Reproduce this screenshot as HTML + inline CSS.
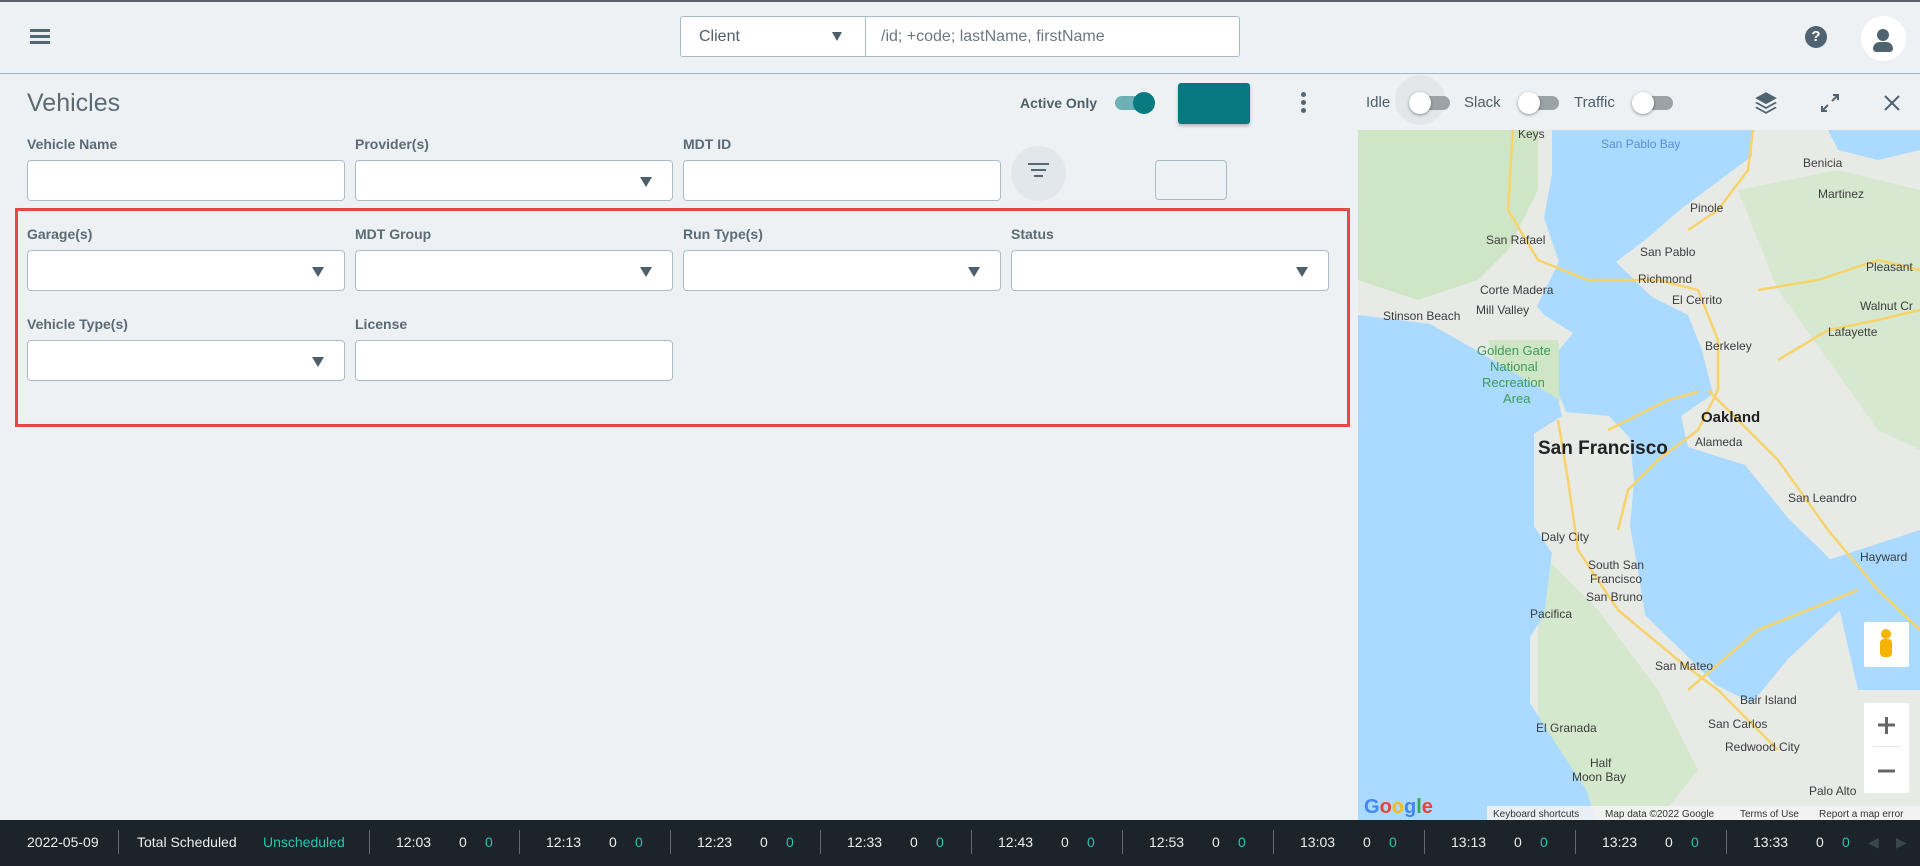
<!DOCTYPE html>
<html><head><meta charset="utf-8">
<style>
*{box-sizing:border-box;margin:0;padding:0}
body{width:1920px;height:866px;overflow:hidden;background:#edf1f4;font-family:"Liberation Sans",sans-serif;position:relative;color:#4f5f69}
.abs{position:absolute}
.lbl{position:absolute;font-size:14px;font-weight:bold;color:#5b6b75}
.inp{position:absolute;width:318px;height:41px;background:#fff;border:1px solid #a9bcc6;border-radius:4px}
.inp.dd::after{content:"";position:absolute;right:20px;top:16px;border-left:6px solid transparent;border-right:6px solid transparent;border-top:10px solid #4f5f69}
.tg{position:absolute;width:38px;height:14px;border-radius:7px;background:#9ba3a7}
.tg i{position:absolute;left:-3px;top:-4px;width:22px;height:22px;border-radius:50%;background:#fff;box-shadow:0 1px 3px rgba(0,0,0,.4)}
.bb{position:absolute;top:834px;font-size:14px;color:#eceff1}
.tq{color:#26c6b2}
.sep{position:absolute;top:830px;width:1px;height:24px;background:#5f6b73}
.ml{font-family:"Liberation Sans",sans-serif;font-size:12px;fill:#3c3c3c}
</style></head><body>
<div class="abs" style="left:0;top:0;width:1920px;height:2px;background:#5a6268"></div>
<div class="abs" style="left:0;top:73px;width:1920px;height:1px;background:#a9b6bf"></div>
<!-- hamburger -->
<div class="abs" style="left:30px;top:29px;width:20px;height:3px;background:#546873;box-shadow:0 6px 0 #546873,0 12px 0 #546873"></div>
<!-- search -->
<div class="abs" style="left:680px;top:16px;width:560px;height:41px;background:#fff;border:1px solid #a9bcc6;border-radius:3px"></div>
<div class="abs" style="left:865px;top:17px;width:1px;height:39px;background:#a9bcc6"></div>
<div class="abs" style="left:699px;top:28px;font-size:16px;color:#4f5f69">Client</div>
<div class="abs" style="left:832px;top:32px;border-left:5px solid transparent;border-right:5px solid transparent;border-top:9px solid #4f5f69"></div>
<div class="abs" style="left:881px;top:28px;font-size:16px;color:#6b7780">/id; +code; lastName, firstName</div>
<!-- help / avatar -->
<div class="abs" style="left:1805px;top:26px;width:22px;height:22px;border-radius:50%;background:#4f6470;color:#fff;font-size:15px;font-weight:bold;text-align:center;line-height:22px">?</div>
<div class="abs" style="left:1861px;top:16px;width:45px;height:45px;border-radius:50%;background:#fff"></div>
<div class="abs" style="left:1877px;top:29px;width:12px;height:12px;border-radius:50%;background:#4f6470"></div>
<div class="abs" style="left:1873px;top:42px;width:20px;height:10px;border-radius:10px 10px 5px 5px;background:#4f6470"></div>
<!-- title row -->
<div class="abs" style="left:27px;top:89px;font-size:25px;font-weight:300;color:#5b6b75">Vehicles</div>
<div class="abs" style="left:1020px;top:95px;font-size:14px;font-weight:bold;color:#4f5f69">Active Only</div>
<div class="abs" style="left:1115px;top:96px;width:38px;height:14px;border-radius:7px;background:#6fb0b6"></div>
<div class="abs" style="left:1133px;top:92px;width:22px;height:22px;border-radius:50%;background:#087a80"></div>
<div class="abs" style="left:1178px;top:83px;width:72px;height:41px;border-radius:3px;background:#07787f;box-shadow:0 2px 3px rgba(0,0,0,.25)"></div>
<div class="abs" style="left:1301px;top:92px;width:5px;height:5px;border-radius:50%;background:#546873;box-shadow:0 8px 0 #546873,0 16px 0 #546873"></div>
<!-- row1 -->
<div class="lbl" style="left:27px;top:136px">Vehicle Name</div>
<div class="lbl" style="left:355px;top:136px">Provider(s)</div>
<div class="lbl" style="left:683px;top:136px">MDT ID</div>
<div class="inp" style="left:27px;top:160px"></div>
<div class="inp dd" style="left:355px;top:160px"></div>
<div class="inp" style="left:683px;top:160px"></div>
<div class="abs" style="left:1011px;top:146px;width:55px;height:55px;border-radius:50%;background:#e2e7eb"></div>
<div class="abs" style="left:1028px;top:163px;width:21px;height:2px;background:#546873"></div>
<div class="abs" style="left:1031px;top:169px;width:15px;height:2px;background:#546873"></div>
<div class="abs" style="left:1034px;top:175px;width:9px;height:2px;background:#546873"></div>
<div class="abs" style="left:1155px;top:160px;width:72px;height:40px;border:1px solid #a9bcc6;border-radius:4px"></div>
<!-- red box -->
<div class="abs" style="left:15px;top:208px;width:1335px;height:219px;border:3px solid #e8483f"></div>
<div class="lbl" style="left:27px;top:226px">Garage(s)</div>
<div class="lbl" style="left:355px;top:226px">MDT Group</div>
<div class="lbl" style="left:683px;top:226px">Run Type(s)</div>
<div class="lbl" style="left:1011px;top:226px">Status</div>
<div class="inp dd" style="left:27px;top:250px"></div>
<div class="inp dd" style="left:355px;top:250px"></div>
<div class="inp dd" style="left:683px;top:250px"></div>
<div class="inp dd" style="left:1011px;top:250px"></div>
<div class="lbl" style="left:27px;top:316px">Vehicle Type(s)</div>
<div class="lbl" style="left:355px;top:316px">License</div>
<div class="inp dd" style="left:27px;top:340px"></div>
<div class="inp" style="left:355px;top:340px"></div>
<!-- map header -->
<div class="abs" style="left:1366px;top:94px;font-size:15px;color:#4f5f69">Idle</div>
<div class="abs" style="left:1395px;top:75px;width:50px;height:50px;border-radius:50%;background:#e3e7ea"></div>
<div class="tg" style="left:1412px;top:96px"><i></i></div>
<div class="abs" style="left:1464px;top:94px;font-size:15px;color:#4f5f69">Slack</div>
<div class="tg" style="left:1521px;top:96px"><i></i></div>
<div class="abs" style="left:1574px;top:94px;font-size:15px;color:#4f5f69">Traffic</div>
<div class="tg" style="left:1635px;top:96px"><i></i></div>
<svg class="abs" style="left:1753px;top:90px" width="26" height="26" viewBox="0 0 24 24"><path d="M12 2 2 7.5 12 13l10-5.5z" fill="#4f6470"/><path d="M3.5 11 12 15.7 20.5 11 22 12 12 17.5 2 12z" fill="#4f6470"/><path d="M3.5 15.5 12 20.2 20.5 15.5 22 16.5 12 22 2 16.5z" fill="#4f6470"/></svg>
<svg class="abs" style="left:1819px;top:92px" width="22" height="22" viewBox="0 0 22 22" stroke="#4f6470" stroke-width="2" fill="none"><path d="M13 9 19 3M14 3h5v5M9 13 3 19M3 14v5h5"/></svg>
<svg class="abs" style="left:1883px;top:94px" width="18" height="18" viewBox="0 0 18 18" stroke="#4f6470" stroke-width="2"><path d="M2 2 16 16M16 2 2 16"/></svg>
<!-- map -->
<svg class="abs" style="left:1358px;top:130px" width="562" height="690" viewBox="0 0 562 690">
<rect width="562" height="690" fill="#e8eae6"/>
<path d="M0 0H180V60L150 120 120 150 60 170 0 150z" fill="#cfe6c6"/>
<path d="M380 60 480 40 562 60V320L520 300 470 230 420 160z" fill="#d6e9d0"/>
<path d="M180 420 240 480 300 560 340 640 300 690H180z" fill="#d3e8cc"/>
<path d="M130 210 200 210 205 270 150 280z" fill="#cfe6c6"/>
<path d="M0 185 72 194 118 220 200 269 204 286 176 304 176 396 194 423 186 485 172 507 172 573 200 617 229 661 237 690H0z" fill="#aadaff"/>
<path d="M194 0H394V26L358 53 323 79 287 110 258 132 294 167 330 185 344 220 355 264 323 286 330 317 387 335 430 388 466 423 502 463 477 485 430 529 394 573 358 555 323 520 287 485 280 441 272 396 276 352 272 308 251 286 208 282 201 264 201 220 215 203 186 185 179 176 201 132 186 88 194 44z" fill="#aadaff"/>
<path d="M470 0H562V20L520 30 480 20z" fill="#aadaff"/>
<path d="M470 430 562 400V560L500 560z" fill="#aadaff"/>
<g stroke="#f7d36b" stroke-width="2.5" fill="none">
<path d="M155 0 150 80 180 130 230 150 300 150 340 160 360 210 360 260 340 300 300 330 270 360 260 400"/>
<path d="M250 300 310 270 340 262"/>
<path d="M200 290 210 350 220 420 260 480 320 530 360 560 420 620"/>
<path d="M350 260 420 330 470 400 520 460 562 500"/>
<path d="M330 560 400 500 500 460"/>
<path d="M400 160 460 150 520 130 562 140"/>
<path d="M420 230 470 200 520 190 562 180"/>
<path d="M395 0 390 40 360 80 330 100"/>
</g>
<g class="ml">
<text x="160" y="8">Keys</text>
<text x="243" y="18" fill="#5a8fd0" style="fill:#5a8fd0">San Pablo Bay</text>
<text x="445" y="37">Benicia</text>
<text x="460" y="68">Martinez</text>
<text x="332" y="82">Pinole</text>
<text x="128" y="114">San Rafael</text>
<text x="282" y="126">San Pablo</text>
<text x="508" y="141">Pleasant</text>
<text x="280" y="153">Richmond</text>
<text x="122" y="164">Corte Madera</text>
<text x="314" y="174">El Cerrito</text>
<text x="502" y="180">Walnut Cr</text>
<text x="25" y="190">Stinson Beach</text>
<text x="118" y="184">Mill Valley</text>
<text x="470" y="206">Lafayette</text>
<text x="347" y="220">Berkeley</text>
<text x="119" y="225" style="fill:#3d9b55;font-size:13px">Golden Gate</text>
<text x="132" y="241" style="fill:#3d9b55;font-size:13px">National</text>
<text x="124" y="257" style="fill:#3d9b55;font-size:13px">Recreation</text>
<text x="145" y="273" style="fill:#3d9b55;font-size:13px">Area</text>
<text x="343" y="292" style="font-size:15px;font-weight:bold;fill:#222">Oakland</text>
<text x="337" y="316">Alameda</text>
<text x="180" y="324" style="font-size:19px;font-weight:bold;fill:#222">San Francisco</text>
<text x="430" y="372">San Leandro</text>
<text x="183" y="411">Daly City</text>
<text x="502" y="431">Hayward</text>
<text x="230" y="439">South San</text>
<text x="232" y="453">Francisco</text>
<text x="228" y="471">San Bruno</text>
<text x="172" y="488">Pacifica</text>
<text x="297" y="540">San Mateo</text>
<text x="382" y="574">Bair Island</text>
<text x="350" y="598">San Carlos</text>
<text x="178" y="602">El Granada</text>
<text x="367" y="621">Redwood City</text>
<text x="232" y="637">Half</text>
<text x="214" y="651">Moon Bay</text>
<text x="451" y="665">Palo Alto</text>
</g>
<rect x="506" y="492" width="45" height="45" fill="#fff" rx="2"/>
<circle cx="528" cy="504" r="5" fill="#f5b400"/><rect x="522" y="509" width="12" height="18" rx="4" fill="#f5b400"/>
<rect x="506" y="573" width="45" height="90" fill="#fff" rx="2"/>
<rect x="515" y="616" width="27" height="1" fill="#e6e6e6"/>
<path d="M520 595h17M528.5 587v17M520 641h17" stroke="#666" stroke-width="3"/>
<text x="6" y="683" style="font-size:20px;font-weight:bold;fill:#4285f4;font-family:'Liberation Sans'">G<tspan fill="#ea4335">o</tspan><tspan fill="#fbbc05">o</tspan>g<tspan fill="#34a853">l</tspan><tspan fill="#ea4335">e</tspan></text>
<rect x="129" y="676" width="433" height="14" fill="#f3f3f3" opacity=".85"/>
<text x="135" y="687" style="font-size:10px;fill:#333">Keyboard shortcuts</text>
<text x="247" y="687" style="font-size:10px;fill:#333">Map data ©2022 Google</text>
<text x="382" y="687" style="font-size:10px;fill:#333">Terms of Use</text>
<text x="461" y="687" style="font-size:10px;fill:#333">Report a map error</text>
</svg>
<!-- bottom bar -->
<div class="abs" style="left:0;top:820px;width:1920px;height:46px;background:#1c2329"></div>
<div class="bb" style="left:27px">2022-05-09</div>
<div class="sep" style="left:118px"></div>
<div class="bb" style="left:137px">Total Scheduled</div>
<div class="bb tq" style="left:263px">Unscheduled</div>
<div class="sep" style="left:369px"></div><div class="bb" style="left:396px">12:03</div><div class="bb" style="left:459px">0</div><div class="bb tq" style="left:485px">0</div>
<div class="sep" style="left:519px"></div><div class="bb" style="left:546px">12:13</div><div class="bb" style="left:609px">0</div><div class="bb tq" style="left:635px">0</div>
<div class="sep" style="left:670px"></div><div class="bb" style="left:697px">12:23</div><div class="bb" style="left:760px">0</div><div class="bb tq" style="left:786px">0</div>
<div class="sep" style="left:820px"></div><div class="bb" style="left:847px">12:33</div><div class="bb" style="left:910px">0</div><div class="bb tq" style="left:936px">0</div>
<div class="sep" style="left:971px"></div><div class="bb" style="left:998px">12:43</div><div class="bb" style="left:1061px">0</div><div class="bb tq" style="left:1087px">0</div>
<div class="sep" style="left:1122px"></div><div class="bb" style="left:1149px">12:53</div><div class="bb" style="left:1212px">0</div><div class="bb tq" style="left:1238px">0</div>
<div class="sep" style="left:1273px"></div><div class="bb" style="left:1300px">13:03</div><div class="bb" style="left:1363px">0</div><div class="bb tq" style="left:1389px">0</div>
<div class="sep" style="left:1424px"></div><div class="bb" style="left:1451px">13:13</div><div class="bb" style="left:1514px">0</div><div class="bb tq" style="left:1540px">0</div>
<div class="sep" style="left:1575px"></div><div class="bb" style="left:1602px">13:23</div><div class="bb" style="left:1665px">0</div><div class="bb tq" style="left:1691px">0</div>
<div class="sep" style="left:1726px"></div><div class="bb" style="left:1753px">13:33</div><div class="bb" style="left:1816px">0</div><div class="bb tq" style="left:1842px">0</div>
<div class="bb" style="left:1868px;color:#3b454c">◀</div><div class="bb" style="left:1896px;color:#3b454c">▶</div>
</body></html>
